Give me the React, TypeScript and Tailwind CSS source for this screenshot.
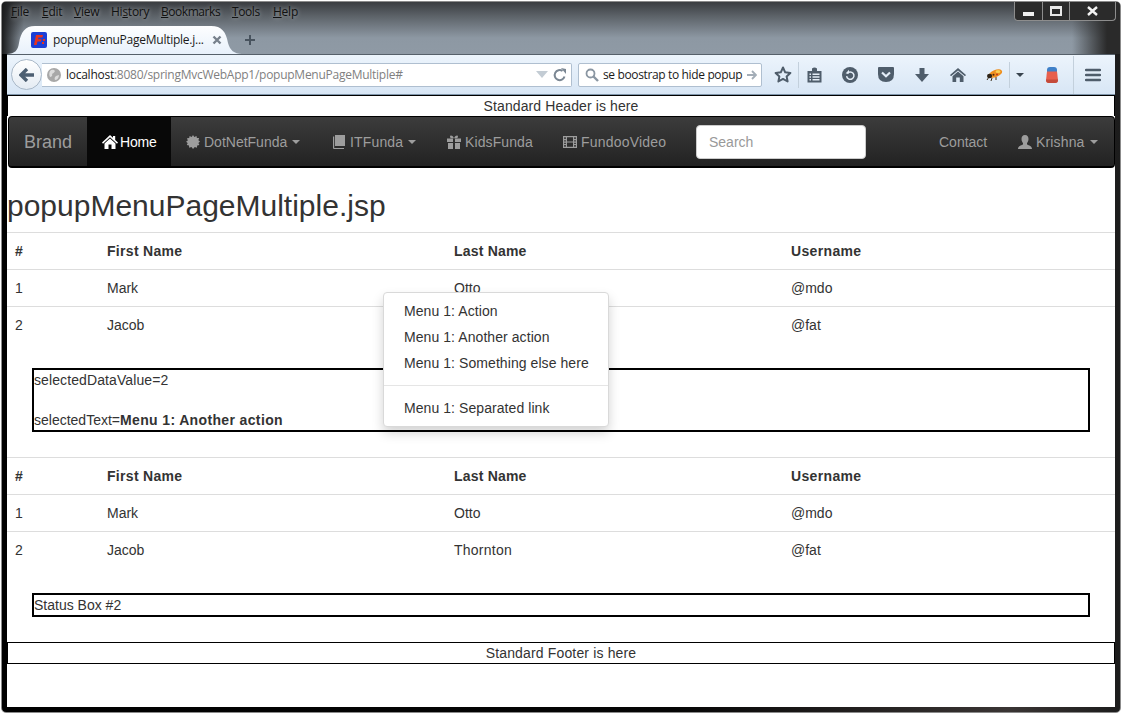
import React from "react";

const ICON = "#4f5d6b";

function Caret() {
  return <span className="inline-block w-0 h-0 border-x-4 border-t-4 border-x-transparent border-t-current ml-[5px] align-middle" />;
}

function G({ children }: { children: React.ReactNode }) {
  return (
    <svg viewBox="0 0 14 14" className="w-[14px] h-[14px] mr-[4px] shrink-0" fill="currentColor">
      {children}
    </svg>
  );
}

function NavItem({ icon, label, caret, active, cls }: { icon?: React.ReactNode; label: string; caret?: boolean; active?: boolean; cls?: string }) {
  return (
    <a className={`flex items-center pl-[15px] shrink-0 whitespace-nowrap ${cls ?? ""} ${active ? "bg-[#080808] text-white" : "text-[#9d9d9d]"}`}>
      {icon}
      <span>{label}</span>
      {caret && <Caret />}
    </a>
  );
}

const CELL_TRACK = [
  ["", "tracking-[0.3px]", "tracking-[0.2px]", "tracking-[0.35px]"],
  ["", "", "", ""],
  ["", "", "tracking-[0.25px]", ""],
];

function Table() {
  const rows = [
    ["#", "First Name", "Last Name", "Username"],
    ["1", "Mark", "Otto", "@mdo"],
    ["2", "Jacob", "Thornton", "@fat"],
  ];
  return (
    <div>
      {rows.map((r, i) => (
        <div key={i} className={`grid grid-cols-[92px_347px_337px_332px] border-t border-[#ddd] ${i === 0 ? "font-bold" : ""}`}>
          {r.map((c, j) => (
            <div key={c} className={`p-2 leading-5 ${CELL_TRACK[i][j]}`}>{c}</div>
          ))}
        </div>
      ))}
    </div>
  );
}

function TB({ children, cls }: { children: React.ReactNode; cls?: string }) {
  return <div className={`w-[30px] h-[30px] flex items-center justify-center shrink-0 ${cls ?? ""}`}>{children}</div>;
}

function Sep({ cls }: { cls?: string }) {
  return <div className={`w-px h-[26px] bg-[#c3d0dc] shrink-0 ${cls ?? ""}`} />;
}

export default function App() {
  return (
    <div className="w-[1122px] h-[714px] p-px bg-white overflow-hidden font-['Liberation_Sans',Arial,sans-serif] text-[14px] text-[#333]">
      <div className="relative w-[1120px] h-[712px] rounded-[5px] border border-[#8b8b8b] bg-[linear-gradient(90deg,#000_0%,#050505_60%,#3a3534_90%,#1c1c1c_100%)] flex flex-col overflow-hidden">
        {/* Title area */}
        <div className="relative h-[52px] shrink-0 [background:linear-gradient(90deg,#1a1b1c_0px,rgba(26,27,28,0)_22px,rgba(26,27,28,0)_1070px,#2a2a2a_1105px),linear-gradient(180deg,#3a3d41_0px,#5c6268_14px,#8d98a3_36px,#8f9aa5_52px)]">
          <div className="h-[24px] flex items-start pt-[1px] pl-[9px] text-[12px] leading-[17px] text-[#111] font-['Open_Sans',sans-serif] tracking-[-0.25px] [text-shadow:0_0_4px_rgba(255,255,255,0.5)]">
            <span className="w-[31px]"><u>F</u>ile</span>
            <span className="w-[32px]"><u>E</u>dit</span>
            <span className="w-[37px]"><u>V</u>iew</span>
            <span className="w-[50px]">Hi<u>s</u>tory</span>
            <span className="w-[71px] tracking-[-0.45px]"><u>B</u>ookmarks</span>
            <span className="w-[41px] tracking-[-0.4px]"><u>T</u>ools</span>
            <span><u>H</u>elp</span>
          </div>
          <div className="relative h-[28px] flex items-center pl-[29px]">
            <svg className="absolute left-[5px] top-0" width="235" height="28" viewBox="0 0 235 28">
              <defs>
                <linearGradient id="tabg" x1="0" y1="0" x2="0" y2="1">
                  <stop offset="0" stopColor="#fdfeff" />
                  <stop offset="1" stopColor="#e8f1fb" />
                </linearGradient>
              </defs>
              <path d="M0 28C8 28 11 24 12 17C14 6 18 0 28 0L204 0C215 0 219 6 221 17C223 24 227 28 235 28Z" fill="url(#tabg)" />
            </svg>
            <svg className="relative shrink-0" width="16" height="16" viewBox="0 0 16 16">
              <rect width="16" height="16" rx="2" fill="#1c3fd6" />
              <path d="M5 3H12L11.4 5.5H7.4L7 7.2H10.5L10 9.5H6.5L5.6 13H3Z" fill="#e8321c" />
              <rect x="12" y="7" width="2" height="2" fill="#e8321c" />
              <rect x="11" y="10" width="2" height="2" fill="#e8321c" />
            </svg>
            <span className="relative ml-[6px] w-[151px] whitespace-nowrap text-[12px] text-[#1a1a1a] font-['Open_Sans',sans-serif] tracking-[-0.25px]">popupMenuPageMultiple.j...</span>
            <svg className="relative ml-[8px] shrink-0" width="10" height="10" viewBox="0 0 10 10">
              <path d="M1.5 1.5L8.5 8.5M8.5 1.5L1.5 8.5" stroke="#77818c" strokeWidth="2.4" />
            </svg>
            <svg className="relative ml-[22px] shrink-0" width="12" height="12" viewBox="0 0 12 12">
              <path d="M6 1V11M1 6H11" stroke="#48535e" strokeWidth="2" />
            </svg>
          </div>
          {/* Window controls */}
          <div className="absolute right-[4px] top-0 w-[102px] h-[19px] flex bg-[#2b2b2b] border border-t-0 border-[#8d8d8d] rounded-b-[4px]">
            <div className="w-[28px] border-r border-[#8d8d8d] flex items-center justify-center">
              <div className="w-[11px] h-[4px] bg-[#f0f0f0] mt-[5px]" />
            </div>
            <div className="w-[27px] border-r border-[#8d8d8d] flex items-center justify-center">
              <div className="w-[12px] h-[10px] border-2 border-t-[3px] border-[#e8e8e8]" />
            </div>
            <div className="flex-1 flex items-center justify-center">
              <svg width="11" height="10" viewBox="0 0 11 10">
                <path d="M1 1L10 9M10 1L1 9" stroke="#f2f2f2" strokeWidth="2.4" />
              </svg>
            </div>
          </div>
        </div>

        {/* Toolbar */}
        <div className="mx-[5px] h-[41px] shrink-0 flex items-center pl-[4px] border-t border-b border-t-[#56606a] border-b-[#7f95aa] bg-[linear-gradient(180deg,#ecf4fc,#d8e6f5)]">
          <div className="relative z-10 w-[31px] h-[31px] rounded-full bg-[linear-gradient(180deg,#fff,#e4ebf3)] border border-[#a9b8c8] flex items-center justify-center shrink-0">
            <svg width="16" height="14" viewBox="0 0 16 14">
              <path d="M8 1L2 7L8 13M2.5 7H15" fill="none" stroke="#4d5f72" strokeWidth="3.4" />
            </svg>
          </div>
          <div className="w-[530px] h-[24px] bg-white border border-l-0 border-[#afbfd0] rounded-r-[2px] flex items-center pl-[5px] pr-[4px] shrink-0">
            <svg width="14" height="14" viewBox="0 0 14 14" className="shrink-0">
              <circle cx="7" cy="7" r="7" fill="#a8a8a8" />
              <path d="M3 3C5 1 7 2 8 3C7 5 6 5 5 6C6 8 4 9 3 9C2 7 2 5 3 3ZM9 8L12 7C12 10 10 12 8 12C7 10 8 9 9 8Z" fill="#dcdcdc" />
            </svg>
            <span className="ml-[5px] text-[12px] whitespace-nowrap font-['Open_Sans',sans-serif] tracking-[-0.26px] text-[#7f7f7f]">
              <span className="text-[#1a1a1a]">localhost</span>:8080/springMvcWebApp1/popupMenuPageMultiple#
            </span>
            <div className="flex-1" />
            <div className="w-0 h-0 border-x-[6px] border-t-[7px] border-x-transparent border-t-[#c3ccd4]" />
            <svg width="14" height="14" viewBox="0 0 14 14" className="ml-[5px] shrink-0">
              <path d="M11.5 8.5A5 5 0 1 1 9.5 3" fill="none" stroke="#7b8793" strokeWidth="2" />
              <path d="M8 0L13 1V6Z" fill="#7b8793" />
            </svg>
          </div>
          <div className="ml-[6px] w-[184px] h-[24px] bg-white border border-[#afbfd0] rounded-[2px] flex items-center pl-[6px] pr-[4px] shrink-0">
            <svg width="14" height="14" viewBox="0 0 14 14" className="shrink-0">
              <circle cx="5.5" cy="5.5" r="4" fill="none" stroke="#8a96a2" strokeWidth="1.8" />
              <path d="M8.5 8.5L13 13" stroke="#8a96a2" strokeWidth="2.4" />
            </svg>
            <span className="ml-[4px] text-[12px] whitespace-nowrap font-['Open_Sans',sans-serif] tracking-[-0.36px] text-[#1a1a1a]">se boostrap to hide popup</span>
            <div className="flex-1" />
            <svg width="11" height="10" viewBox="0 0 11 10" className="shrink-0">
              <path d="M6 1L10 5L6 9M10 5H1" fill="none" stroke="#a3adb7" strokeWidth="1.8" />
            </svg>
          </div>
          <TB cls="ml-[6px]">
            <svg width="18" height="17" viewBox="0 0 18 17">
              <path d="M9 1.5L11.2 6.3L16.4 6.9L12.6 10.4L13.6 15.5L9 12.9L4.4 15.5L5.4 10.4L1.6 6.9L6.8 6.3Z" fill="none" stroke={ICON} strokeWidth="2" strokeLinejoin="round" />
            </svg>
          </TB>
          <Sep />
          <TB>
            <svg width="15" height="16" viewBox="0 0 15 16">
              <path d="M0.5 4H5V1.5Q7.5 -0.5 10 1.5V4H14.5V15.5H0.5Z" fill={ICON} />
              <path d="M2.5 6.5H4V8H2.5ZM5.5 6.5H12.5V8H5.5ZM2.5 9.2H4V10.7H2.5ZM5.5 9.2H12.5V10.7H5.5ZM2.5 12H4V13.5H2.5ZM5.5 12H12.5V13.5H5.5Z" fill="#e4edf7" />
            </svg>
          </TB>
          <TB cls="ml-[6px]">
            <svg width="16" height="16" viewBox="0 0 16 16">
              <circle cx="8" cy="8" r="8" fill={ICON} />
              <path d="M5.2 6.5A3.7 3.7 0 1 1 4.6 9.2" fill="none" stroke="#e4edf7" strokeWidth="1.5" />
              <path d="M7 2.8V6.6H3.6Z" fill="#e4edf7" />
            </svg>
          </TB>
          <TB cls="ml-[6px]">
            <svg width="16" height="15" viewBox="0 0 16 15">
              <path d="M0 1Q0 0 1 0H15Q16 0 16 1V7Q16 15 8 15Q0 15 0 7Z" fill={ICON} />
              <path d="M4 5.5L8 9.3L12 5.5" fill="none" stroke="#e4edf7" strokeWidth="2.2" />
            </svg>
          </TB>
          <TB cls="ml-[6px]">
            <svg width="14" height="14" viewBox="0 0 14 14">
              <path d="M4.5 0H9.5V6H14L7 14L0 6H4.5Z" fill={ICON} />
            </svg>
          </TB>
          <TB cls="ml-[6px]">
            <svg width="16" height="14" viewBox="0 0 16 14">
              <path d="M8 0L16 7L15 8.3L8 2.4L1 8.3L0 7Z" fill={ICON} />
              <path d="M8 3.6L13.5 8.3V14H9.8V9.5H6.2V14H2.5V8.3Z" fill={ICON} />
            </svg>
          </TB>
          <TB cls="ml-[6px]">
            <svg width="17" height="13" viewBox="0 0 17 13">
              <path d="M3 9L1 12M6 10L5 13M10 9L10 12" stroke="#3a2c18" strokeWidth="1" />
              <ellipse cx="9.5" cy="5.5" rx="7" ry="3.6" transform="rotate(-22 9.5 5.5)" fill="#ee8f1f" />
              <ellipse cx="12" cy="3.6" rx="2.5" ry="1.5" fill="#f8cf55" />
              <ellipse cx="3.6" cy="8" rx="2.6" ry="2.2" fill="#2e2418" />
              <circle cx="7.5" cy="6.8" r="1" fill="#4a2a0e" />
              <circle cx="11" cy="6.6" r="1" fill="#c0341a" />
            </svg>
          </TB>
          <Sep />
          <div className="w-[20px] flex justify-center shrink-0">
            <div className="w-0 h-0 border-x-4 border-t-4 border-x-transparent border-t-[#39444f]" />
          </div>
          <TB cls="ml-[7px]">
            <svg width="12" height="16" viewBox="0 0 12 16">
              <path d="M1 3Q1 0 4 0H8Q11 0 11 3V5H1Z" fill="#3f80c8" />
              <path d="M1 4.5H11L12 13Q12 16 9 16H3Q0 16 0 13Z" fill="#e85f4d" />
              <path d="M0 12.5H12V13Q12 16 9 16H3Q0 16 0 13Z" fill="#c44a3a" />
            </svg>
          </TB>
          <Sep cls="ml-[6px] h-[38px]" />
          <TB cls="ml-[4px]">
            <svg width="16" height="14" viewBox="0 0 16 14">
              <path d="M1 2H15M1 7H15M1 12H15" stroke={ICON} strokeWidth="2.4" strokeLinecap="round" />
            </svg>
          </TB>
        </div>

        {/* Page */}
        <div className="relative mx-[5px] h-[612px] bg-white shrink-0">
          <div className="h-[21px] border-t border-x border-black text-center leading-5 tracking-[0.1px]">Standard Header is here</div>
          <div className="h-[52px] ml-px flex items-stretch border border-black border-b-2 rounded-[4px] bg-[linear-gradient(180deg,#3c3c3c,#222)]">
            <a className="flex items-center px-[15px] pt-px text-[18px] text-[#9d9d9d] w-[78px] shrink-0">Brand</a>
            <NavItem
              active
              cls="w-[84px] pt-px tracking-[-0.2px]"
              label="Home"
              icon={
                <svg viewBox="0 0 16 14" className="w-[16px] h-[14px] mr-[2px] shrink-0" fill="currentColor">
                  <path d="M8 0L11 2.8V1H13.2V4.9L16 7.6L15 8.7L8 2.2L1 8.7L0 7.6Z" />
                  <path d="M8 3.6L13.5 8.6V14H9.5V9.5H6.5V14H2.5V8.6Z" />
                </svg>
              }
            />
            <NavItem
              cls="w-[147px] pt-px"
              label="DotNetFunda"
              caret
              icon={
                <G>
                  <path d="M7 0L8.3 2L10.5 1L10.9 3.1L13.1 3.1L12.4 5.2L14 6.6L12.4 8L13.4 10L11.2 10.5L10.9 12.7L8.8 12L7 14L5.5 12.1L3.2 12.8L3 10.5L0.8 10L1.7 8L0 6.8L1.8 5.4L1 3.2L3.2 3.1L3.6 1L5.7 2Z" />
                </G>
              }
            />
            <NavItem
              cls="w-[114px] pt-px tracking-[0.15px]"
              label="ITFunda"
              caret
              icon={
                <svg viewBox="0 0 12 14" className="w-[12px] h-[14px] mr-[5px] shrink-0" fill="currentColor">
                  <path d="M2 0H12V11H2Z" />
                  <path d="M0 1.5H1.2V13H11V14H1Q0 14 0 13Z" />
                </svg>
              }
            />
            <NavItem
              cls="w-[116px] pt-px tracking-[0.1px]"
              label="KidsFunda"
              icon={
                <G>
                  <path d="M0 3.5H6V7H0ZM8 3.5H14V7H8ZM1 8H6V14H1ZM8 8H13V14H8Z" />
                  <path d="M7 3.2C5.5 3.5 3 3.4 3 1.7C3 0 5.5 0 7 3.2C8.5 0 11 0 11 1.7C11 3.4 8.5 3.5 7 3.2Z" />
                </G>
              }
            />
            <NavItem
              cls="w-[133px] pt-px tracking-[0.2px]"
              label="FundooVideo"
              icon={
                <G>
                  <path fillRule="evenodd" d="M0 1H14V13H0ZM1.2 2.2V4H2.8V2.2ZM1.2 5.2V6.5H2.8V5.2ZM1.2 7.7V9H2.8V7.7ZM1.2 10V11.8H2.8V10ZM11.2 2.2V4H12.8V2.2ZM11.2 5.2V6.5H12.8V5.2ZM11.2 7.7V9H12.8V7.7ZM11.2 10V11.8H12.8V10ZM4 2.2V6.4H10V2.2ZM4 7.6V11.8H10V7.6Z" />
                </G>
              }
            />
            <div className="ml-[15px] pt-px flex items-center shrink-0">
              <div className="w-[170px] h-[34px] bg-white border border-[#ccc] rounded-[4px] px-3 flex items-center text-[#999]">Search</div>
            </div>
            <div className="flex-1" />
            <NavItem cls="w-[79px] pt-px" label="Contact" />
            <NavItem
              cls="w-[110px] pt-px tracking-[0.15px]"
              label="Krishna"
              caret
              icon={
                <G>
                  <path d="M7 0C9.5 0 10.5 2 10.5 4C10.5 6 9.5 7.5 9 8V9.5C11 10.5 14 11 14 14H0C0 11 3 10.5 5 9.5V8C4.5 7.5 3.5 6 3.5 4C3.5 2 4.5 0 7 0Z" />
                </G>
              }
            />
            <div className="w-px shrink-0" />
          </div>
          <h1 className="mt-[21px] mb-[9px] text-[30px] leading-[33px] font-normal text-[#333] whitespace-nowrap">popupMenuPageMultiple.jsp</h1>
          <div className="h-px" />
          <Table />
          <div className="mx-[25px] mt-[25px] border-2 border-black leading-5">
            <div className="tracking-[0.1px]">selectedDataValue=2</div>
            <div className="h-5" />
            <div>
              selectedText=<b className="tracking-[0.36px]">Menu 1: Another action</b>
            </div>
          </div>
          <div className="h-[25px]" />
          <Table />
          <div className="mx-[25px] mt-[25px] border-2 border-black leading-5">Status Box #2</div>
          <div className="mt-[25px] h-[22px] border border-black text-center leading-5 tracking-[0.15px]">Standard Footer is here</div>

          {/* Popup menu */}
          <div className="absolute left-[376px] top-[197px] w-[226px] py-[5px] bg-white border border-[#d9d9d9] rounded-[4px] shadow-[0_6px_12px_rgba(0,0,0,0.175)] tracking-[0.07px]">
            <div className="px-5 py-[3px] leading-5 whitespace-nowrap">Menu 1: Action</div>
            <div className="px-5 py-[3px] leading-5 whitespace-nowrap">Menu 1: Another action</div>
            <div className="px-5 py-[3px] leading-5 whitespace-nowrap">Menu 1: Something else here</div>
            <div className="h-px my-[9px] bg-[#e5e5e5]" />
            <div className="px-5 py-[3px] leading-5 whitespace-nowrap">Menu 1: Separated link</div>
          </div>
        </div>
      </div>
    </div>
  );
}
